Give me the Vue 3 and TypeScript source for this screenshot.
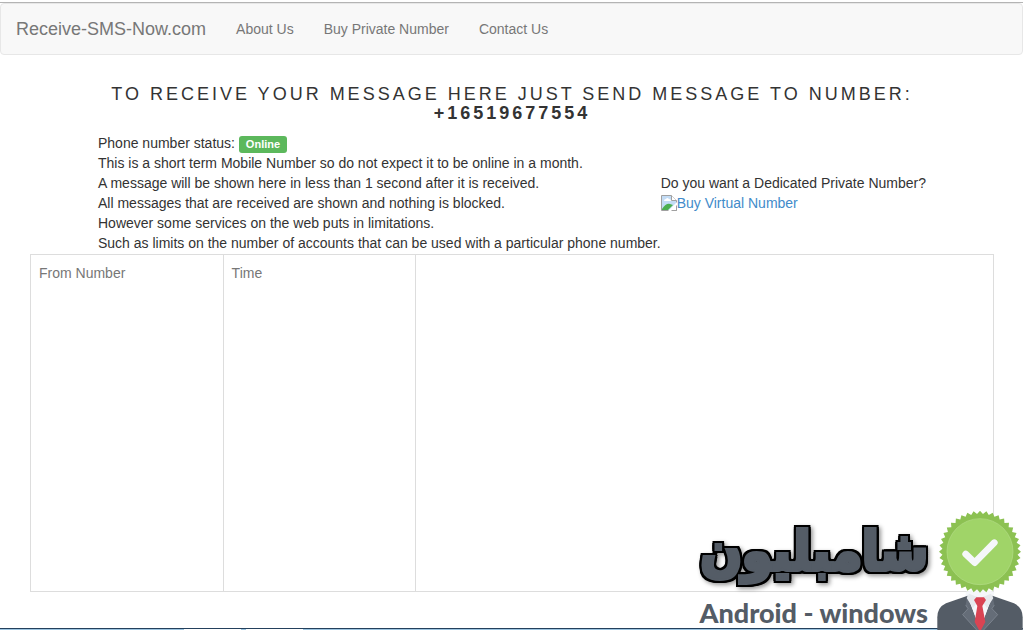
<script setup lang="ts">
interface NavItem {
  label: string
  href: string
}

const navItems: NavItem[] = [
  { label: 'About Us', href: '#about' },
  { label: 'Buy Private Number', href: '#buy' },
  { label: 'Contact Us', href: '#contact' },
]

const phone = '+16519677554'

const notes: string[] = [
  'This is a short term Mobile Number so do not expect it to be online in a month.',
  'A message will be shown here in less than 1 second after it is received.',
  'All messages that are received are shown and nothing is blocked.',
  'However some services on the web puts in limitations.',
  'Such as limits on the number of accounts that can be used with a particular phone number.',
]

const teeth = 40
const sealPoints: string = Array.from({ length: teeth * 2 }, (_, i) => {
  const radius = i % 2 === 0 ? 123 : 113
  const angle = (Math.PI * i) / teeth
  return `${(165 + radius * Math.cos(angle)).toFixed(1)},${(155 + radius * Math.sin(angle)).toFixed(1)}`
}).join(' ')
</script>

<template>
  <div class="page">
    <header class="top">
      <nav class="navbar">
        <a class="brand" href="#home">Receive-SMS-Now.com</a>
        <a v-for="item in navItems" :key="item.href" class="nav-link" :href="item.href">{{ item.label }}</a>
      </nav>
    </header>

    <main class="content">
      <h1 class="title">
        To receive your message here just send message to number:
        <strong class="phone">{{ phone }}</strong>
      </h1>

      <section class="info">
        <div class="notes">
          <p>Phone number status: <span class="label">Online</span></p>
          <p v-for="note in notes" :key="note">{{ note }}</p>
        </div>
        <div class="offer">
          <p>Do you want a Dedicated Private Number?</p>
          <a class="offer-link" href="#virtual">
            <svg class="broken" viewBox="0 0 16 16" aria-hidden="true">
              <path d="M.5.5h10l5 5v10H.5z" fill="#fff" stroke="#a0a0a0" />
              <path d="M1 1h9v5h5v3l-6 6H1z" fill="#c3dcf5" />
              <path d="M3 6q0-2 2-2 1-2 3 0 2 0 2 2z" fill="#fff" />
              <path d="M1 15v-1Q5 8 9 9l3 1-5 5z" fill="#4caf50" />
              <path d="M10.500.5v5h5" fill="#fff" stroke="#a0a0a0" />
              <path d="M7 16l9-9v3l-6 6z" fill="#fff" />
              <path d="M11 15.500h4.500V11" fill="none" stroke="#a0a0a0" />
            </svg><span>Buy Virtual Number</span>
          </a>
        </div>
      </section>

      <table class="messages">
        <thead>
          <tr>
            <th scope="col">From Number</th>
            <th scope="col">Time</th>
            <td></td>
          </tr>
        </thead>
      </table>
    </main>

    <footer class="taskbar">
      <span class="task first"></span>
      <span class="task second"></span>
    </footer>

    <aside class="watermark">
      <div class="wordmark">
        <div class="arabic" lang="ar" dir="rtl">شامبليون</div>
        <div class="latin">Android - windows</div>
      </div>
      <svg class="badge" viewBox="36 0 258 390" aria-hidden="true">
        <path d="M122 276l42-12 44 12-4 20-40 94-42-94z" fill="#f5f7fa" />
        <path d="M37 390v-38q0-30 26-42l65-23 37 103z" fill="#545c66" />
        <path d="M293 390v-38q0-30-26-42l-65-23-37 103z" fill="#545c66" />
        <path d="M127 287l-5 28 7 11-16 18 42 46h10z" fill="#656d78" />
        <path d="M203 287l5 28-7 11 17 18-42 46h-11z" fill="#656d78" />
        <path d="M122 315l7 11-16 18 42 46M208 315l-7 11 17 18-42 46" stroke="#8a919b" stroke-width="2" fill="none" />
        <path d="M127 287l38 100 38-100-38 8z" fill="#f5f7fa" />
        <path d="M132 281l-7 13 19 30 21-29 21 29 19-30-7-13-33 13z" fill="#e6e9ed" />
        <path d="M154 292h23l6 8-11 18 9 48-13 24h-6l-13-24 8-48-10-18z" fill="#da4453" />
        <polygon :points="sealPoints" fill="#8cc152" />
        <circle cx="165" cy="155" r="99" fill="#a0d468" stroke="#b4dc88" stroke-width="2" />
        <path d="M122 162l27 26 59-60" fill="none" stroke="#f5f7fa" stroke-width="20" stroke-linecap="round" stroke-linejoin="round" />
      </svg>
    </aside>
  </div>
</template>

<style>
body {
  margin: 0;
  background: #fff;
}
</style>

<style scoped>
.page {
  position: relative;
  display: flex;
  flex-direction: column;
  min-height: 100vh;
  overflow: hidden;
  color: #333;
  font: 14px/20px "Liberation Sans", Arial, sans-serif;
}

.top {
  margin-top: 2px;
  border-top: 1px solid #b4b4b4;
}

.navbar {
  display: flex;
  align-items: center;
  height: 50px;
  border: 1px solid #e7e7e7;
  border-radius: 4px;
  background: #f8f8f8;
}

.brand,
.nav-link {
  padding: 15px;
  color: #777;
  text-decoration: none;
}

.brand {
  font-size: 18px;
}

.content {
  padding: 30px 29px 0 30px;
}

.title {
  margin: 0 0 10px;
  font-size: 18px;
  font-weight: 400;
  line-height: 19px;
  letter-spacing: 3px;
  text-align: center;
  text-transform: uppercase;
}

.phone {
  display: block;
  font-weight: 700;
}

.info {
  display: flex;
  justify-content: center;
  align-items: center;
  padding-bottom: 1px;
}

p {
  margin: 0;
}

.label {
  display: inline-block;
  padding: 3px 7px;
  border-radius: 3px;
  background: #5cb85c;
  color: #fff;
  font-size: 11px;
  font-weight: 700;
  line-height: 11px;
}

.offer-link {
  display: flex;
  align-items: center;
  color: #428bca;
  text-decoration: none;
}

.broken {
  width: 16px;
  height: 16px;
}

.messages {
  width: 100%;
  border-collapse: collapse;
  table-layout: fixed;
}

.messages th,
.messages td {
  height: 320px;
  padding: 8px;
  border: 1px solid #ddd;
  color: #777;
  font-weight: 400;
  text-align: left;
  vertical-align: top;
}

.messages th {
  width: 20%;
  box-sizing: border-box;
}

.taskbar {
  display: flex;
  height: 1px;
  margin-top: auto;
  border-top: 1px solid #24405c;
  background: #9cc4e0;
}

.task {
  height: 1px;
  background: #fff;
}

.first {
  width: 57px;
  margin-left: 184px;
}

.second {
  width: 57px;
  margin-left: 5px;
}

.watermark {
  position: absolute;
  right: 0;
  bottom: 0;
  display: flex;
  align-items: flex-end;
}

.wordmark {
  padding-right: 9px;
  color: #545c66;
}

.arabic {
  padding-bottom: 8px;
  font: 700 54px/72px "DejaVu Sans Condensed", "DejaVu Sans", sans-serif;
  -webkit-text-stroke: 4px #545c66;
  paint-order: stroke fill;
  filter: drop-shadow(2px 0 0 #000) drop-shadow(-2px 0 0 #000) drop-shadow(0 2px 0 #000) drop-shadow(0 -2px 0 #000)
    drop-shadow(2px 2px 2px rgba(0, 0, 0, 0.4));
}

.latin {
  font: 900 27px/34px Lato, sans-serif;
  text-align: right;
}

.badge {
  width: 86px;
  height: 130px;
}
</style>
